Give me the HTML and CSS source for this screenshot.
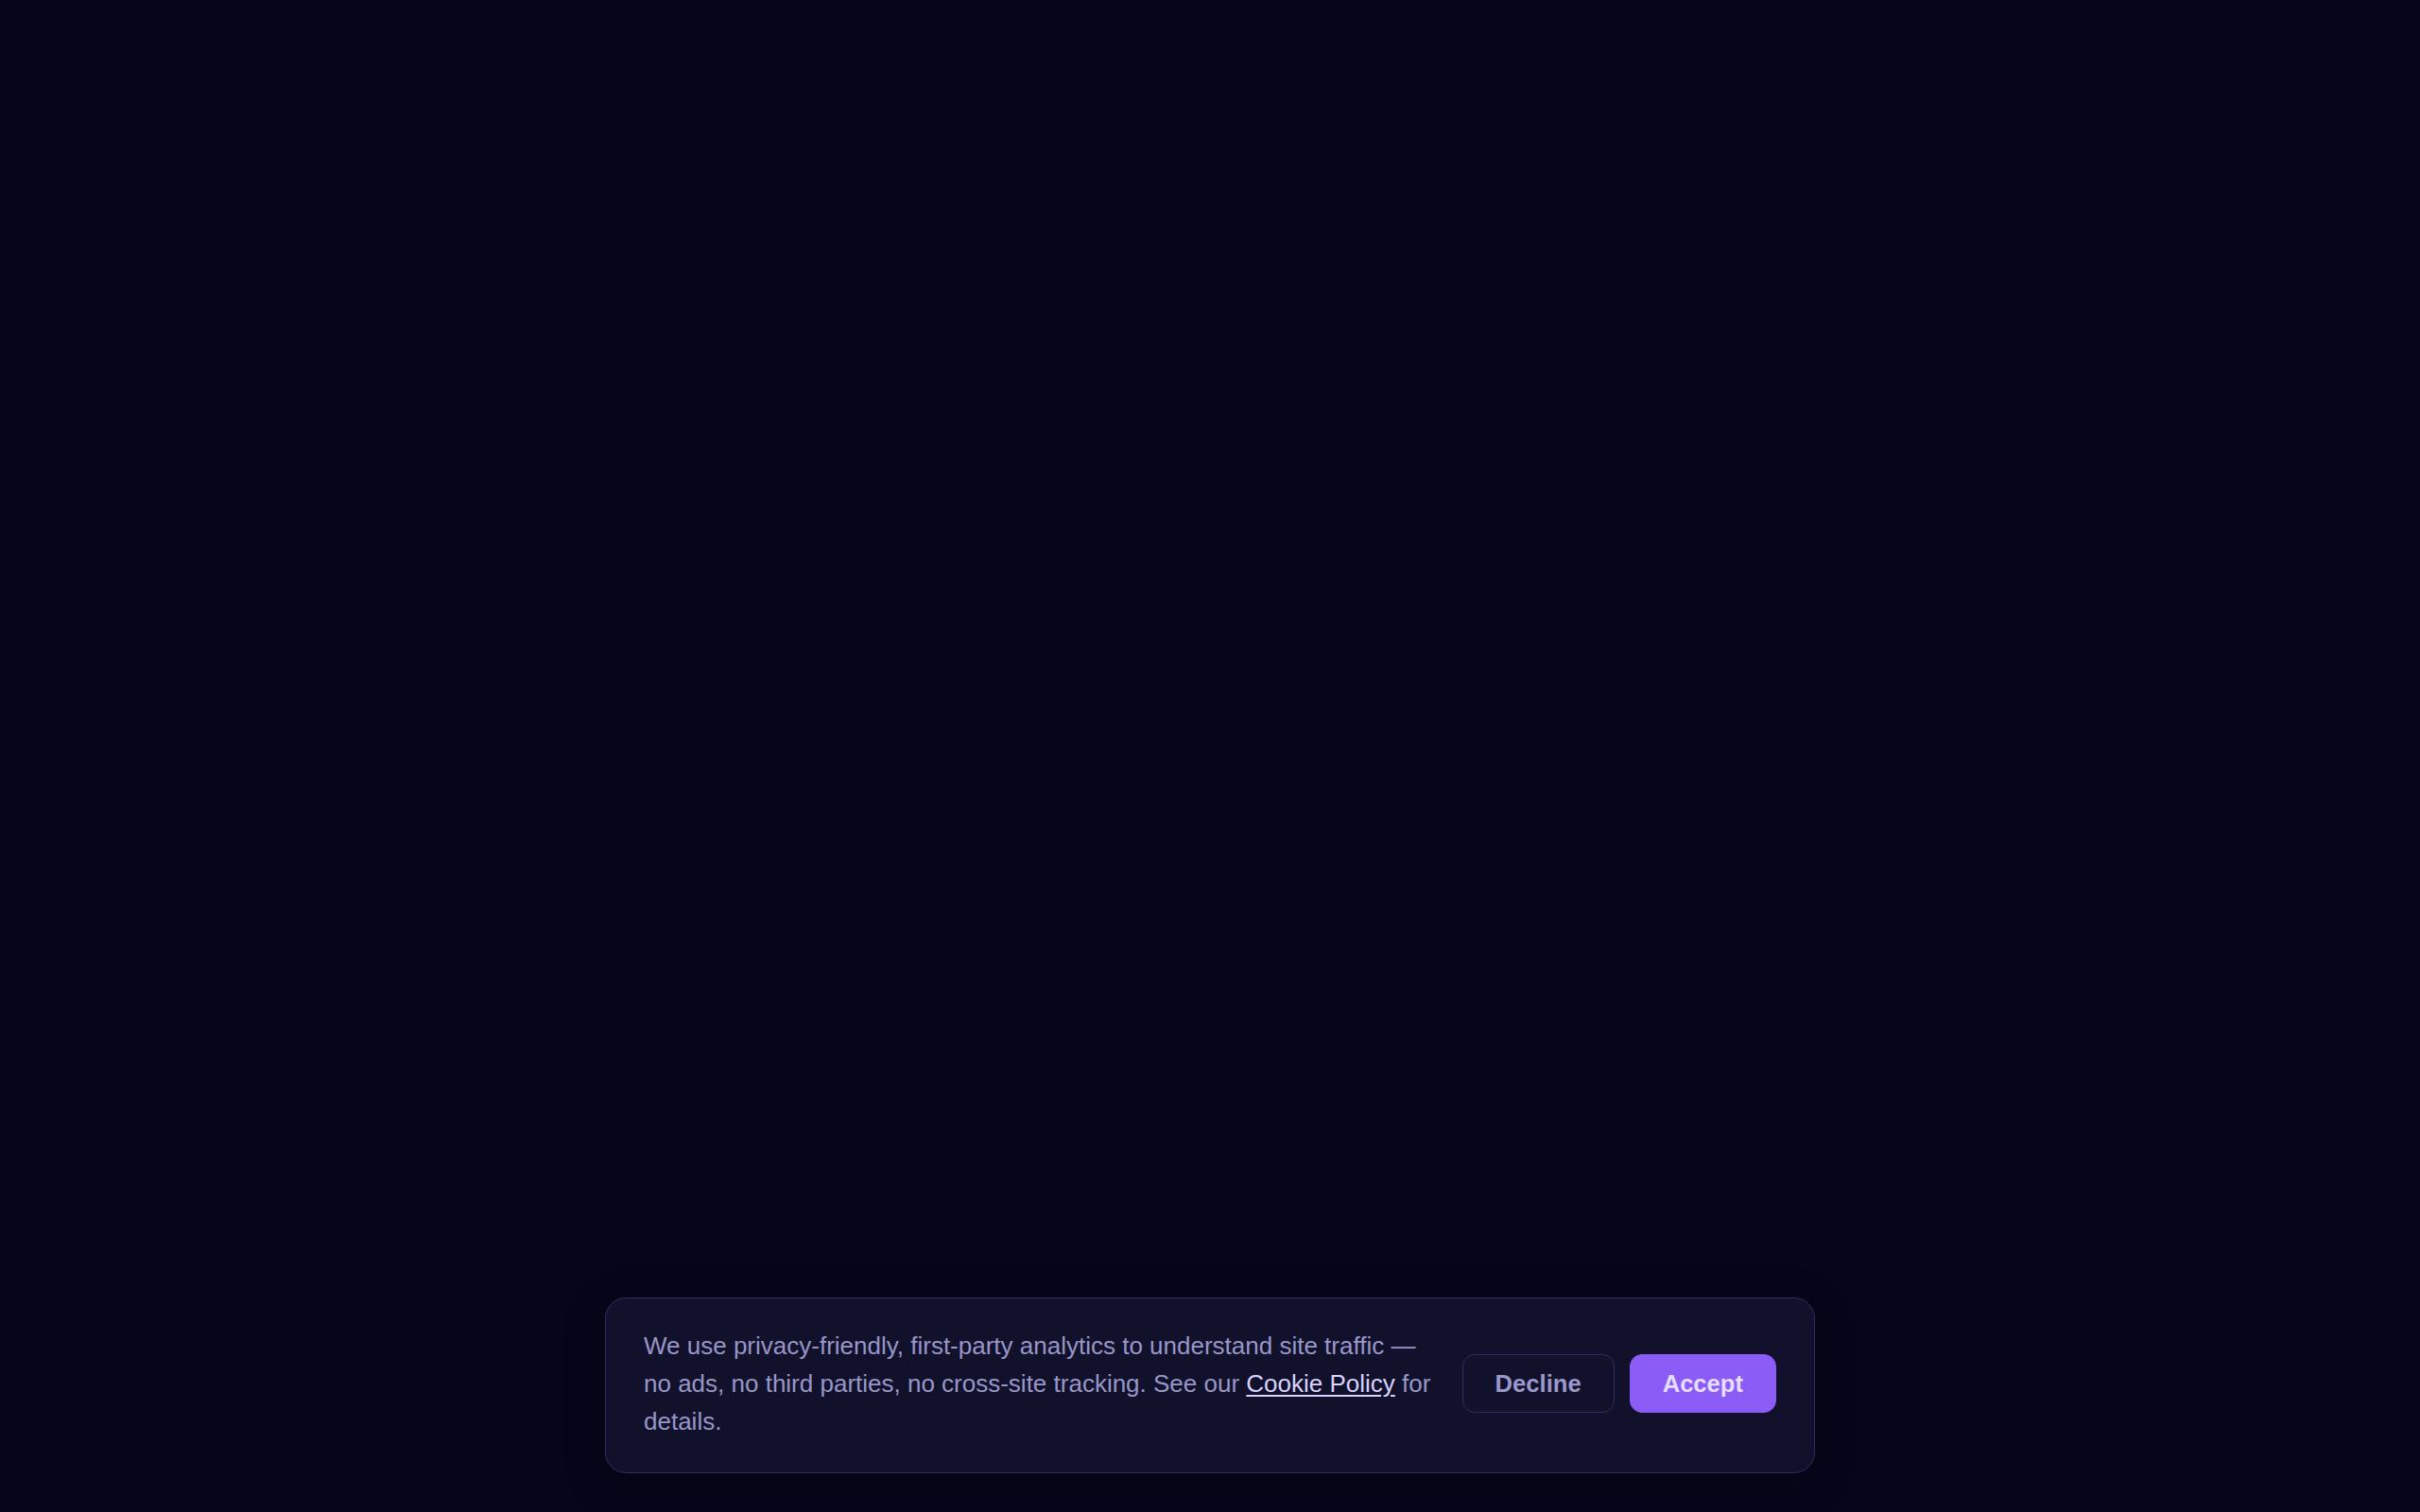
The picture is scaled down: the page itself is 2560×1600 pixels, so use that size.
FILE: index.html
```html
<!DOCTYPE html>
<html lang="en">
<head>
<meta charset="utf-8">
<title>Cookie consent</title>
<link rel="stylesheet" href="styles.css">
</head>
<body>
<main class="page"></main>
<div class="banner" role="dialog" aria-label="Cookie consent">
  <p class="banner-text">We use privacy-friendly, first-party analytics to understand site traffic — no ads, no third parties, no cross-site tracking. See our <a href="#" class="banner-link">Cookie Policy</a> for details.</p>
  <div class="banner-actions">
    <button class="btn btn-decline" type="button">Decline</button>
    <button class="btn btn-accept" type="button">Accept</button>
  </div>
</div>
</body>
</html>
```
FILE: styles.css
```css
html, body {
  margin: 0;
  padding: 0;
}
body {
  min-height: 100vh;
  box-sizing: border-box;
  background: #05061a;
  font-family: "Liberation Sans", Arial, Helvetica, sans-serif;
  display: flex;
  flex-direction: column;
  align-items: center;
  padding-bottom: 41px;
}
.page {
  flex: 1;
}
.banner {
  width: 1280px;
  box-sizing: border-box;
  background: #11112b;
  border: 1px solid #312c5e;
  border-radius: 22px;
  padding: 30px 40px 34px;
  display: flex;
  align-items: center;
  gap: 30px;
  box-shadow: 0 10px 40px rgba(0, 0, 0, 0.35);
}
.banner-text {
  flex: 1;
  margin: 0;
  font-size: 26px;
  line-height: 40px;
  color: #9896c8;
}
.banner-link {
  color: #d8d2ff;
  text-decoration: underline;
  text-underline-offset: 3px;
}
.banner-actions {
  display: flex;
  gap: 16px;
  flex-shrink: 0;
}
.btn {
  font-family: "Liberation Sans", Arial, Helvetica, sans-serif;
  font-weight: 700;
  font-size: 25.6px;
  line-height: 28px;
  padding: 16px 34px;
  border-radius: 13px;
  border: 1px solid transparent;
  cursor: pointer;
}
.btn-decline {
  background: transparent;
  border-color: #312c5e;
  color: #9a98cc;
}
.btn-accept {
  background: #8b5cf6;
  border-color: #8b5cf6;
  color: #e6defe;
}
```
